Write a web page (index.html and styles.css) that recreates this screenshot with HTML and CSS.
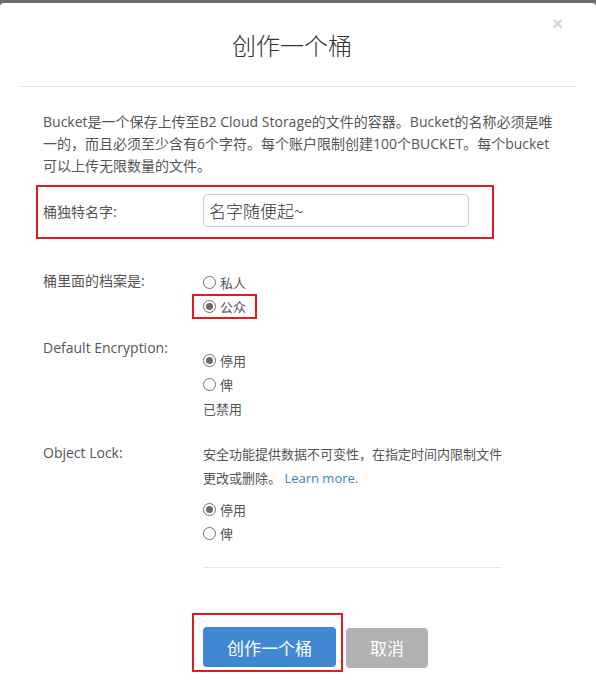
FILE: index.html
```html
<!DOCTYPE html>
<html lang="zh-CN">
<head>
<meta charset="utf-8">
<title>创作一个桶</title>
<link rel="stylesheet" href="styles.css">
</head>
<body>
<div class="modal">
  <div class="modal-header">
    <h1 class="modal-title">创作一个桶</h1>
    <span class="close">×</span>
  </div>
  <div class="modal-body">
    <p class="intro">Bucket是一个保存上传至B2 Cloud Storage的文件的容器。Bucket的名称必须是唯一的，而且必须至少含有6个字符。每个账户限制创建100个BUCKET。每个bucket可以上传无限数量的文件。</p>

    <div class="form-row name-row mark">
      <label class="row-label">桶独特名字:</label>
      <div class="input">名字随便起~</div>
    </div>

    <div class="form-row files-row">
      <div class="row-label">桶里面的档案是:</div>
      <div class="radios">
        <div class="radio"><span class="dot"></span>私人</div>
        <div class="radio checked mark-inline"><span class="dot"></span>公众</div>
      </div>
    </div>

    <div class="form-row enc-row">
      <div class="row-label">Default Encryption:</div>
      <div class="radios offset">
        <div class="radio checked"><span class="dot"></span>停用</div>
        <div class="radio"><span class="dot"></span>俾</div>
        <div class="status">已禁用</div>
      </div>
    </div>

    <div class="form-row lock-row">
      <div class="row-label">Object Lock:</div>
      <div class="lock">
        <p class="lock-text">安全功能提供数据不可变性，在指定时间内限制文件<br>更改或删除。 <a class="link">Learn more.</a></p>
        <div class="radios">
          <div class="radio checked"><span class="dot"></span>停用</div>
          <div class="radio"><span class="dot"></span>俾</div>
        </div>
        <div class="rule"></div>
      </div>
    </div>

    <div class="actions">
      <div class="mark-btn"><button class="btn btn-primary">创作一个桶</button></div>
      <button class="btn btn-cancel">取消</button>
    </div>
  </div>
</div>
</body>
</html>
```

FILE: styles.css
```css
html, body {
  margin: 0;
  padding: 0;
}
body {
  background: #6c6c6c;
  font-family: "Open Sans", "Noto Sans CJK SC", sans-serif;
  color: #555;
  width: 596px;
  height: 692px;
  overflow: hidden;
}
.modal {
  margin-top: 3px;
  background: #fff;
  border-radius: 4px 4px 0 0;
  height: 689px;
}
.modal-header {
  position: relative;
  margin: 0 19px;
  height: 84px;
  border-bottom: 1px solid #e5e5e5;
  box-sizing: border-box;
}
.modal-title {
  margin: 0;
  padding-top: 26px;
  padding-right: 12px;
  text-align: center;
  font-family: "Noto Sans CJK SC", sans-serif;
  font-weight: 300;
  font-size: 24px;
  line-height: 32px;
  color: #333;
}
.close {
  position: absolute;
  right: 14px;
  top: 10px;
  font-family: "Liberation Sans", sans-serif;
  font-size: 19px;
  font-weight: bold;
  color: #d4d4d4;
}
.modal-body {
  padding: 24px 43px 0 43px;
}
.intro {
  margin: 0;
  font-size: 14px;
  line-height: 22px;
  color: #555;
}
.form-row {
  display: grid;
  grid-template-columns: 160px 1fr;
}
.row-label {
  font-size: 14px;
  line-height: 22px;
  color: #555;
}
.mark {
  margin-top: 8px;
  margin-left: -7px;
  width: 458px;
  box-sizing: border-box;
  border: 2px solid #e31c24;
  padding: 7px 0 10px 5px;
  align-items: center;
}
.name-row .row-label {
  padding-top: 2px;
}
.input {
  width: 266px;
  height: 33px;
  box-sizing: border-box;
  border: 1px solid #ccc;
  border-radius: 4px;
  padding: 0 5px;
  font-family: "Noto Sans CJK SC", sans-serif;
  font-weight: 300;
  font-size: 17px;
  line-height: 31px;
  color: #333;
}
.files-row {
  margin-top: 31px;
}
.radios {
  display: flex;
  flex-direction: column;
}
.radios.offset {
  margin-top: 11px;
}
.radio {
  display: flex;
  align-items: center;
  height: 24px;
  font-size: 13px;
  color: #555;
}
.dot {
  width: 13px;
  height: 13px;
  box-sizing: border-box;
  border: 1px solid #707070;
  border-radius: 50%;
  margin-right: 4px;
  position: relative;
  flex: none;
}
.radio.checked .dot::after {
  content: "";
  position: absolute;
  left: 2px;
  top: 2px;
  width: 7px;
  height: 7px;
  border-radius: 50%;
  background: #6a6a6a;
}
.mark-inline {
  align-self: flex-start;
  margin-left: -11px;
  padding: 0 9px 0 9px;
  border: 2px solid #e31c24;
  height: 25px;
  box-sizing: border-box;
}
.enc-row {
  margin-top: 18px;
}
.status {
  margin-top: 2px;
  font-size: 13px;
  line-height: 22px;
  color: #555;
}
.lock-row {
  margin-top: 22px;
}
.lock-text {
  margin: 0 0 7px;
  width: 299px;
  font-size: 13px;
  line-height: 24px;
  color: #555;
}
.link {
  color: #3b86c6;
  text-decoration: none;
}
.rule {
  margin-top: 22px;
  width: 299px;
  border-top: 1px solid #e5e5e5;
}
.actions {
  display: flex;
  align-items: center;
  margin-top: 45px;
  margin-left: 149px;
}
.mark-btn {
  border: 2px solid #e31c24;
  padding: 12px 5px 3px 9px;
}
.btn {
  height: 40px;
  border: none;
  border-radius: 4px;
  font-family: "Noto Sans CJK SC", sans-serif;
  font-size: 17px;
  color: #fff;
  padding: 0;
}
.btn-primary {
  width: 133px;
  background: #3f89d3;
}
.btn-cancel {
  width: 82px;
  margin-left: 3px;
  margin-top: 10px;
  background: #b1b2b4;
}
```
